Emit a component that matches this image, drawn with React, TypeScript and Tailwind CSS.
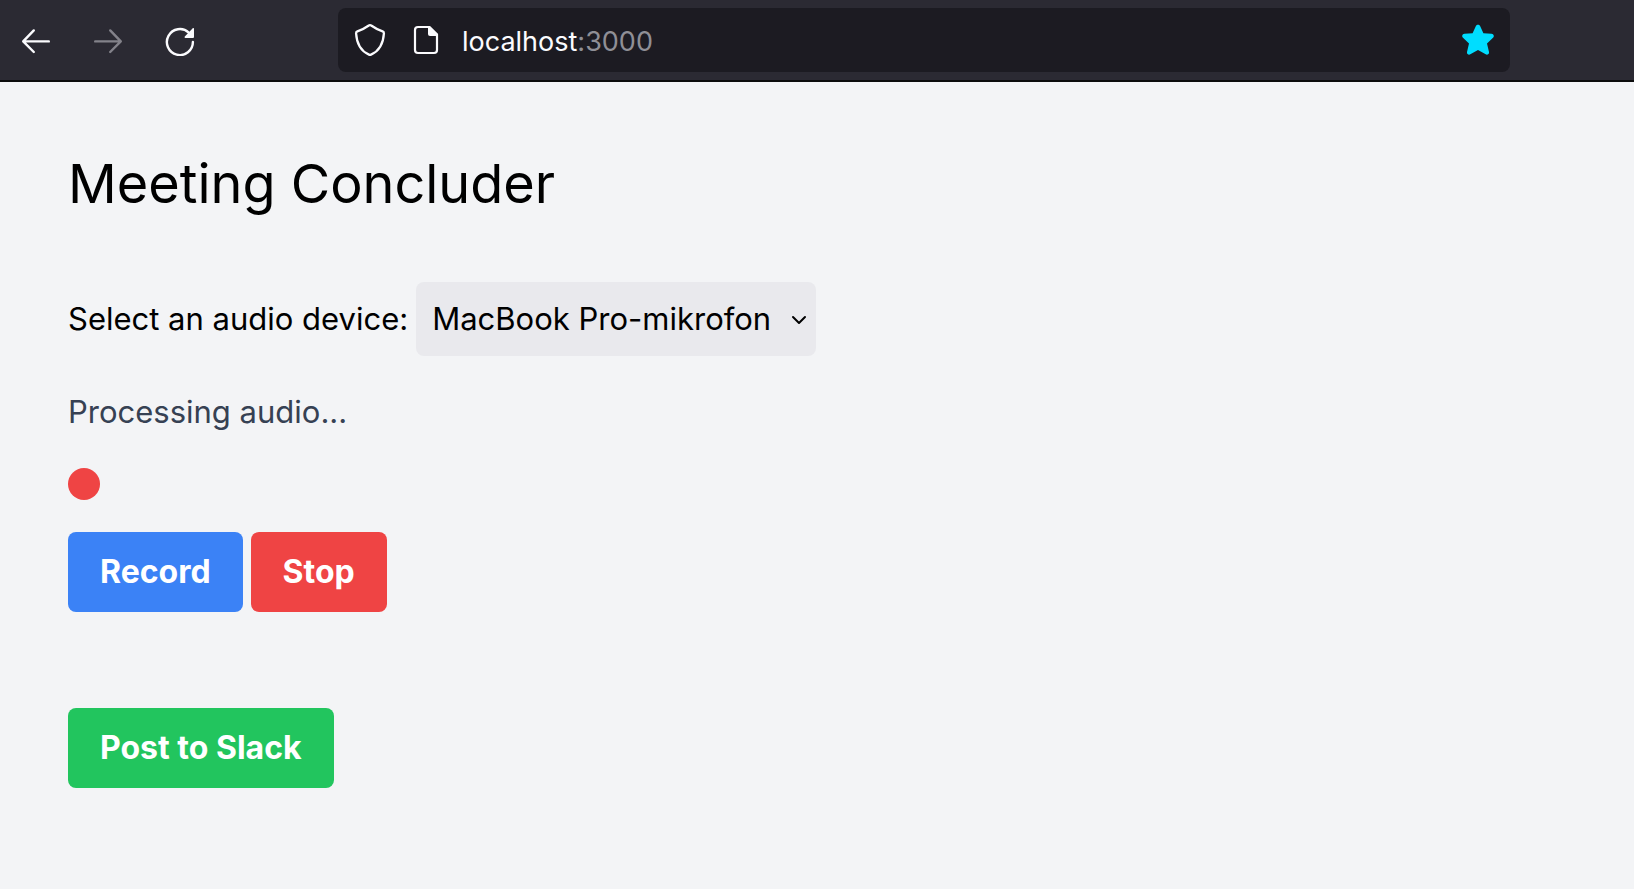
import type { ReactNode } from "react";

function NavButton({ label, disabled, children }: { label: string; disabled?: boolean; children: ReactNode }) {
  return (
    <button
      type="button"
      aria-label={label}
      disabled={disabled}
      className="flex size-8 items-center justify-center text-[#fbfbfe] disabled:text-[#83828a]"
    >
      {children}
    </button>
  );
}

function BrowserBar() {
  return (
    <header className="flex h-[82px] items-center border-b-2 border-[#0c0c0d] bg-[#2b2a33] pl-5 pr-[124px]">
      <nav aria-label="History" className="flex gap-10">
        <NavButton label="Back">
          <svg width="32" height="32" viewBox="0 0 32 32" fill="none" stroke="currentColor" strokeWidth="2.4" strokeLinecap="round" strokeLinejoin="round">
            <path d="M28.800 17.400H3.400M13.800 6.400 3.200 17.400 13.800 28" />
          </svg>
        </NavButton>
        <NavButton label="Forward" disabled>
          <svg width="32" height="32" viewBox="0 0 32 32" fill="none" stroke="currentColor" strokeWidth="2.4" strokeLinecap="round" strokeLinejoin="round">
            <path d="M3.200 17.400h25.400M18.200 6.400 28.800 17.400 18.200 28" />
          </svg>
        </NavButton>
        <NavButton label="Reload">
          <svg width="32" height="32" viewBox="0 0 32 32" fill="none">
            <path d="M28.900 18A13 13 0 1 1 24.800 8.600" stroke="currentColor" strokeWidth="2.4" strokeLinecap="round" />
            <path d="M30 4.600v8.400a1 1 0 0 1-1 1h-7.600c-.8 0-1.100-.9-.6-1.400l7.700-8.200c.6-.6 1.500-.3 1.500.2Z" fill="currentColor" />
          </svg>
        </NavButton>
      </nav>
      <div className="ml-[142px] flex h-16 min-w-0 flex-1 items-center rounded-lg bg-[#1c1b22] px-4 text-[#fbfbfe]">
        <svg className="shrink-0" width="32" height="32" viewBox="0 0 32 32" fill="none" stroke="currentColor" strokeWidth="2.3" strokeLinejoin="round">
          <path d="M14.800 1.500a2.400 2.400 0 0 1 2.400 0c3.700 2.600 7.300 4.500 11.400 5.900a2 2 0 0 1 1.300 2.100C29.300 19.500 25.600 26.900 17 30.600a2.400 2.400 0 0 1-2 0C6.400 26.900 2.700 19.500 2.100 9.500a2 2 0 0 1 1.300-2.100c4.100-1.400 7.700-3.300 11.400-5.900Z" />
        </svg>
        <svg className="ml-6 shrink-0" width="32" height="32" viewBox="0 0 32 32" fill="none">
          <path d="M8 3h11.500L27 10.500V26a3 3 0 0 1-3 3H8a3 3 0 0 1-3-3V6a3 3 0 0 1 3-3Z" stroke="currentColor" strokeWidth="2.2" strokeLinejoin="round" />
          <path d="M18 2.500h2L27.800 10v2H20a2 2 0 0 1-2-2Z" fill="currentColor" />
        </svg>
        <a href="#top" className="ml-5 flex-1 pt-1 text-[27px] leading-8 whitespace-nowrap">
          localhost<span className="text-[#8f8f96]">:3000</span>
        </a>
        <button type="button" aria-label="Edit bookmark" className="shrink-0">
          <svg width="32" height="32" viewBox="0 0 32 32" fill="#00ddff">
            <path d="M13.900 2c.8-1.700 3.400-1.700 4.200 0l3.300 7.200 8.100.6c2.200.2 3.100 2.500 1.500 4l-6 5.600 2 8.500c.4 2-1.600 3.400-3.300 2.400L16 25.900l-7.700 4.400c-1.700 1-3.700-.4-3.300-2.400l2-8.500-6-5.600c-1.600-1.500-.7-3.800 1.500-4l8.100-.6Z" />
          </svg>
        </button>
      </div>
    </header>
  );
}

export default function App() {
  return (
    <div id="top" className="min-h-screen bg-gray-100 font-['Inter','Liberation_Sans',sans-serif] text-[31px] leading-[48px] text-black">
      <BrowserBar />
      <main className="px-[68px] pt-[68px] pb-12">
        <h1 className="text-[54px] leading-[68px]">Meeting Concluder</h1>
        <div className="mt-16 flex items-center gap-2">
          <label htmlFor="audio-device">Select an audio device:</label>
          <div className="relative">
            <select id="audio-device" className="block h-[74px] w-[400px] appearance-none rounded-lg bg-[#e9e9ed] pl-4 pr-10">
              <option>MacBook Pro-mikrofon</option>
            </select>
            <svg className="pointer-events-none absolute top-[30px] right-2" width="18" height="16" viewBox="0 0 18 16" fill="none" stroke="currentColor" strokeWidth="2" strokeLinecap="round" strokeLinejoin="round">
              <path d="m3 5 6 6 6-6" />
            </svg>
          </div>
        </div>
        <p className="mt-8 text-gray-700">Processing audio...</p>
        <div role="status" aria-label="Recording" className="mt-8 size-8 rounded-full bg-[#ef4444]" />
        <div className="mt-8 flex gap-2 text-[32px] font-bold text-white">
          <button type="button" className="rounded-lg bg-[#3b82f6] px-8 py-4 leading-[48px]">Record</button>
          <button type="button" className="rounded-lg bg-[#ef4444] px-8 py-4 leading-[48px]">Stop</button>
        </div>
        <div className="mt-24 flex text-[32px] font-bold text-white">
          <button type="button" className="rounded-lg bg-[#22c55e] px-8 py-4 leading-[48px]">Post to Slack</button>
        </div>
      </main>
    </div>
  );
}
